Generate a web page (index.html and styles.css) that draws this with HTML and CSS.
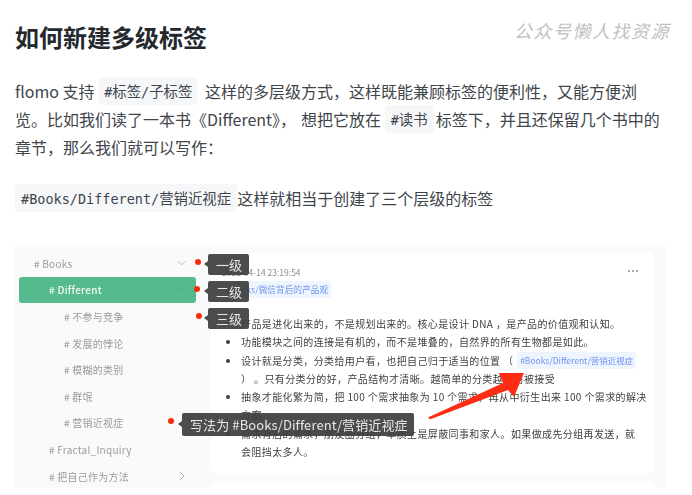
FILE: index.html
```html
<!DOCTYPE html>
<html lang="zh">
<head>
<meta charset="utf-8">
<title>如何新建多级标签</title>
<link rel="stylesheet" href="styles.css">
</head>
<body>
<article class="article">
  <div class="watermark">公众号懒人找资源</div>
  <h1 class="title">如何新建多级标签</h1>
  <p class="para para-first">flomo 支持 <code class="chip chip-gap"><span class="mono">#</span>标签<span class="mono">/</span>子标签</code> 这样的多层级方式，这样既能兼顾标签的便利性，又能方便浏览。比如我们读了一本书《Different》<span class="comma">，</span>想把它放在 <code class="chip chip-tight"><span class="mono">#</span>读书</code>标签下，并且还保留几个书中的章节，那么我们就可以写作：</p>
  <p class="para para-second"><code class="chip"><span class="mono">#Books/Different/</span>营销近视症</code>这样就相当于创建了三个层级的标签</p>
  <figure class="shot">
    <div class="shot-layout">
      <nav class="side">
        <div class="row lv1"><span># Books</span><svg class="chev" viewBox="0 0 10 6"><path d="M1 1l4 4 4-4"/></svg></div>
        <div class="row lv2 active"><span># Different</span><svg class="chev chev-on" viewBox="0 0 10 6"><path d="M1 1l4 4 4-4"/></svg></div>
        <div class="row lv3"><span># 不参与竞争</span></div>
        <div class="row lv3"><span># 发展的悖论</span></div>
        <div class="row lv3"><span># 模糊的类别</span></div>
        <div class="row lv3"><span># 群氓</span></div>
        <div class="row lv3"><span># 营销近视症</span></div>
        <div class="row lv2"><span># Fractal_Inquiry</span></div>
        <div class="row lv2"><span># 把自己作为方法</span><svg class="chev chev-right" viewBox="0 0 6 10"><path d="M1 1l4 4-4 4"/></svg></div>
      </nav>
      <div class="main">
        <section class="card">
          <div class="card-head"><span class="date">2021-04-14 23:19:54</span><span class="more"><i></i><i></i><i></i></span></div>
          <div class="tag-line"><span class="tag">#Books/微信背后的产品观</span></div>
          <ul class="list">
            <li>产品是进化出来的，不是规划出来的。核心是设计 DNA ，是产品的价值观和认知。</li>
            <li>功能模块之间的连接是有机的，而不是堆叠的，自然界的所有生物都是如此。</li>
            <li>设计就是分类，分类给用户看，也把自己归于适当的位置 （ <span class="tag tag-in">#Books/Different/营销近视症</span><br>） 。只有分类分的好，产品结构才清晰。越简单的分类越容易被接受</li>
            <li>抽象才能化繁为简，把 100 个需求抽象为 10 个需求，再从中衍生出来 100 个需求的解决<br>方案</li>
            <li>需求背后的需求，朋友圈分组，本质上是屏蔽同事和家人。如果做成先分组再发送，就<br>会阻挡太多人。</li>
          </ul>
        </section>
        <div class="card card-next"></div>
      </div>
    </div>
    <span class="dot dot-1"></span><span class="dot dot-2"></span><span class="dot dot-3"></span><span class="dot dot-4"></span>
    <span class="tip tip-1">一级</span>
    <span class="tip tip-2">二级</span>
    <span class="tip tip-3">三级</span>
    <span class="tip tip-4">写法为 #Books/Different/营销近视症</span>
    <svg class="arrow" viewBox="0 0 110 60"><path d="M2 51L76 17 72 7 97 7 87 31 81 24 4 53Q0 53 2 51Z"/></svg>
  </figure>
</article>
</body>
</html>
```
FILE: styles.css
```css
* { box-sizing: border-box; }
html, body { margin: 0; padding: 0; background: #fff; }
body { font-family: "Noto Sans CJK SC", "Noto Sans", sans-serif; color: #40454b; overflow: hidden; }
.article { position: relative; padding: 0 15px; width: 692px; height: 495px; overflow: hidden; }
.watermark { position: absolute; left: 514px; top: 17px; font-size: 18px; line-height: 26px; letter-spacing: 1.5px; font-style: italic; color: #c2c2c2; white-space: nowrap; }
.title { margin: 0; padding-top: 19px; font-size: 24px; line-height: 36px; font-weight: 700; color: #24292e; }
.para { margin: 0; font-size: 16px; line-height: 28px; width: 645px; }
.para-first { margin-top: 22px; }
.para-second { margin-top: 23px; }
.comma { margin-right: 5px; }
.chip { display: inline-block; height: 28px; vertical-align: top; padding: 0 6px; font-family: "Noto Sans CJK SC", sans-serif; font-size: 14.4px; line-height: 28px; background: #f6f7f9; border-radius: 3px; color: #40454b; }
.chip-gap { margin-right: 3px; }
.chip-tight { margin-right: 2px; }
.mono { font-family: "DejaVu Sans Mono", monospace; font-size: 13.5px; }
.shot { position: relative; margin: 33px 0 0; width: 651px; height: 243px; background: #fafafa; overflow: hidden; filter: blur(0.55px); font-size: 10px; }
.shot-layout { display: flex; height: 100%; }
.side { width: 196px; flex: none; padding-top: 5px; color: #9b9b9b; }
.row { display: flex; align-items: center; justify-content: space-between; height: 26.6px; font-size: 10px; letter-spacing: 0.25px; margin-left: 4px; width: 177px; padding-right: 10px; border-radius: 3px; }
.lv1 { padding-left: 15px; }
.lv2 { padding-left: 30px; }
.lv3 { padding-left: 45px; }
.active { background: #55bb8e; color: #f2fbf6; font-weight: 500; }
.chev { width: 9px; height: 6px; fill: none; stroke: #a8a8a8; stroke-width: 0.9; }
.chev-on { stroke: #4aa57d; }
.chev-right { width: 6px; height: 10px; margin-right: 1px; }
.main { width: 443px; flex: none; padding-top: 8px; }
.card { background: #fff; border-radius: 5px; height: 220px; padding: 0 16px 0 11px; }
.card-next { height: 20px; margin-top: 8px; }
.card-head { display: flex; justify-content: space-between; align-items: center; height: 24px; padding-top: 14px; }
.date { font-size: 8.5px; color: #8d8d8d; }
.more { display: flex; gap: 2px; margin-top: -3px; }
.more i { width: 2px; height: 2px; border-radius: 50%; background: #8f8f8f; }
.tag-line { margin-top: 4px; height: 17px; }
.tag { display: inline-block; padding: 0 3px; height: 17px; line-height: 17px; background: #eff5ff; color: #6f94ee; border-radius: 2px; font-size: 8.6px; letter-spacing: 0.1px; white-space: nowrap; }
.tag-in { vertical-align: top; margin-left: 1px; font-size: 8.5px; letter-spacing: 0; }
.list { margin: 17px 0 0; padding: 0 0 0 19px; font-size: 10px; line-height: 18.3px; letter-spacing: 0.38px; color: #3f3f3f; white-space: nowrap; }
.dot { position: absolute; width: 6px; height: 6px; border-radius: 50%; background: #fb2a0b; }
.dot-1 { left: 180px; top: 14px; }
.dot-2 { left: 179px; top: 41px; }
.dot-3 { left: 181px; top: 68px; }
.dot-4 { left: 153px; top: 173px; }
.tip { position: absolute; height: 21px; line-height: 21px; padding: 0 7px 0 8px; background: rgba(62, 62, 62, 0.93); color: #e8e8e8; border-radius: 2px; font-size: 13px; white-space: nowrap; }
.tip::before { content: ""; position: absolute; left: -4px; top: 7px; border-right: 4px solid rgba(62, 62, 62, 0.93); border-top: 3.5px solid transparent; border-bottom: 3.5px solid transparent; }
.tip-1 { left: 193px; top: 9px; }
.tip-2 { left: 193px; top: 36px; }
.tip-3 { left: 193px; top: 63px; }
.tip-4 { left: 167px; top: 168px; height: 23px; line-height: 23px; font-size: 13px; letter-spacing: 0.1px; width: 232px; }
.tip-4::before { top: 8px; }
.arrow { position: absolute; left: 412px; top: 121px; width: 110px; height: 60px; fill: #fb2e14; }
```
